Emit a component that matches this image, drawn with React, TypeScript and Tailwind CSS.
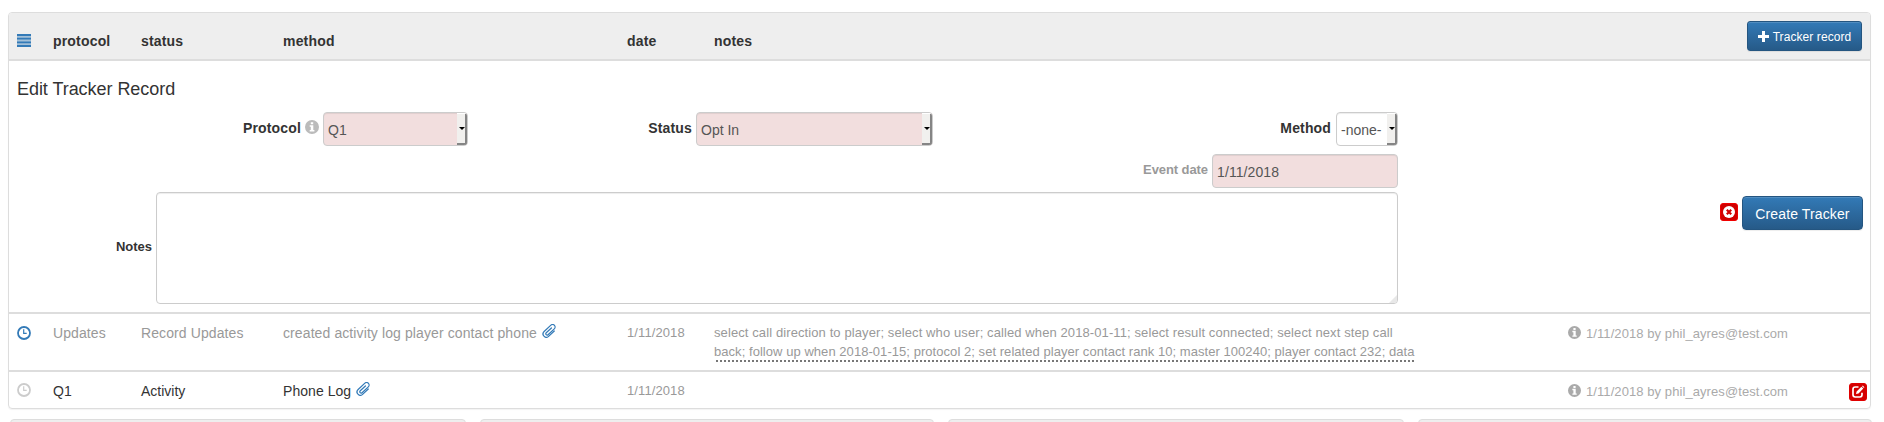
import React from "react";

type IconProps = { className?: string };

const InfoIcon = ({ className = "" }: IconProps) => (
  <svg viewBox="0 0 14 14" className={`shrink-0 ${className}`} fill="currentColor">
    <path fillRule="evenodd" d="M7 0a7 7 0 1 0 0 14A7 7 0 0 0 7 0ZM5.8 2.2h2.4v2H5.8ZM4.7 5.2h3.6v4.9h1.1v1.5H4.7v-1.5h1.1V6.7H4.7Z" />
  </svg>
);

const ClockIcon = ({ className = "" }: IconProps) => (
  <svg viewBox="0 0 14 14" className={`h-3.5 w-3.5 shrink-0 ${className}`} fill="none" stroke="currentColor">
    <circle cx="7" cy="7" r="6" strokeWidth="1.8" />
    <path d="M6.7 3.2v4.2h3" strokeWidth="1.2" />
  </svg>
);

const ClipIcon = () => (
  <svg viewBox="0 0 15 14" className="ml-px mt-px h-3.5 w-[15px] shrink-0 text-[#337ab7]" fill="none" stroke="currentColor" strokeWidth="1.2" strokeLinecap="round">
    <path transform="translate(7.5 7) rotate(47)" d="M3.3-3.500V4.300a3.300 3.300 0 0 1-6.600 0V-5a2.500 2.500 0 0 1 5 0V3.600a1.300 1.300 0 0 1-2.600 0V-3.500" />
  </svg>
);

const RedCloseIcon = () => (
  <svg viewBox="0 0 18 18" className="h-[18px] w-[18px] shrink-0" fill="none">
    <rect x=".5" y=".5" width="17" height="17" rx="2.5" fill="#d00000" stroke="#f00000" />
    <circle cx="9" cy="9" r="6" fill="#fff" />
    <path d="m6.800 6.800 4.400 4.400m0-4.400-4.400 4.400" stroke="#d00000" strokeWidth="2.200" />
  </svg>
);

const RedEditIcon = () => (
  <svg viewBox="0 0 18 18" className="h-[18px] w-[18px] shrink-0" fill="none">
    <rect x=".5" y=".5" width="17" height="17" rx="2.5" fill="#d40000" stroke="#e00000" />
    <path d="M9.500 4H6.200C4.700 4 4 4.700 4 6.200v5.600C4 13.300 4.700 14 6.200 14h4.600c1.500 0 2.200-.7 2.200-2.200V9.800" stroke="#fff" strokeWidth="1.7" />
    <path d="m7 11 .6-2.500 4.800-4.800 1.900 1.900-4.800 4.800ZM13 3.200l.8-.6 1.600 1.600-.6.800Z" fill="#fff" />
  </svg>
);

function SelectBox({ value, className }: { value: string; className: string }) {
  return (
    <button type="button" className={`flex h-[34px] shrink-0 items-stretch overflow-hidden rounded border border-[#ccc] text-left text-[14px] font-normal text-[#555] shadow-[inset_0_1px_1px_rgba(0,0,0,0.075)] ${className}`}>
      <span className="flex-1 whitespace-nowrap pl-1 pt-[7px] leading-5">{value}</span>
      <span className="flex w-[10px] items-center justify-end border-b-2 border-r-2 border-t border-b-[#858585] border-r-[#858585] border-t-white bg-[#f1f0ee]">
        <svg viewBox="0 0 6 3" className="h-[3px] w-1.5 shrink-0"><path d="M0 0h6L3 3Z" /></svg>
      </span>
    </button>
  );
}

function Audit() {
  return (
    <div className="flex w-[283px] gap-[5px] pt-px text-[13px] leading-[19px] tracking-[0.08px] text-[#aaa]">
      <InfoIcon className="mt-0.5 h-[13px] w-[13px]" />
      <span className="whitespace-nowrap">1/11/2018 by phil_ayres@test.com</span>
    </div>
  );
}

export default function App() {
  return (
    <div className="h-[422px] overflow-hidden bg-white pl-2 pt-3 font-['Liberation_Sans',Arial,sans-serif] text-[14px] leading-5 text-[#333]">
      <section className="h-[397px] w-[1863px] overflow-hidden rounded border border-[#ddd] shadow-[0_1px_1px_rgba(0,0,0,0.05)]">
        <header className="flex h-[48px] border-b-2 border-[#ddd] bg-[#eee] pl-2 font-bold tracking-[0.18px]">
          <svg viewBox="0 0 14 13" className="mt-[21px] h-[13px] w-3.5 text-[#337ab7]" fill="currentColor">
            <path opacity=".4" d="M0 0h14v13H0z" />
            <path d="M0 0h14v2H0zM0 3.700h14v1.900H0zM0 7.400h14v1.900H0zM0 11h14v2H0z" />
          </svg>
          <span className="ml-[22px] w-[88px] pt-[18px]">protocol</span>
          <span className="w-[142px] pt-[18px]">status</span>
          <span className="w-[344px] pt-[18px]">method</span>
          <span className="w-[87px] pt-[18px]">date</span>
          <span className="pt-[18px]">notes</span>
          <button className="ml-auto mr-2 mt-2 flex h-[30px] w-[115px] items-center justify-center gap-1 rounded-[3px] border border-[#245580] bg-linear-to-b from-[#337ab7] to-[#265a88] pt-px text-[12px] font-normal tracking-[0.08px] text-white shadow-[inset_0_1px_0_rgba(255,255,255,0.15),0_1px_1px_rgba(0,0,0,0.075)]">
            <svg viewBox="0 0 11 11" className="h-[11px] w-[11px]" fill="currentColor"><path d="M4 0h3v4h4v3H7v4H4V7H0V4h4z" /></svg>
            <span className="whitespace-nowrap">Tracker record</span>
          </button>
        </header>

        <form className="h-[251px]">
          <h4 className="h-[51px] pl-2 pt-[18px] text-[18px] leading-5 tracking-[-0.05px]">Edit Tracker Record</h4>
          <div className="flex">
            <div className="w-[1389px]">
              <div className="flex h-[42px] font-bold">
                <div className="flex w-[459px] justify-end">
                  <span className="mt-1.5 tracking-[0.15px]">Protocol</span>
                  <InfoIcon className="ml-1 mr-1 mt-2 h-3.5 w-3.5 text-[#bbb]" />
                  <SelectBox value="Q1" className="w-[145px] bg-[#f2dede]" />
                </div>
                <div className="flex w-[465px] justify-end gap-1">
                  <span className="mt-1.5 tracking-[0.15px]">Status</span>
                  <SelectBox value="Opt In" className="w-[237px] bg-[#f2dede]" />
                </div>
                <div className="flex w-[465px] justify-end gap-[5px]">
                  <span className="mt-1.5 tracking-[0.15px]">Method</span>
                  <SelectBox value="-none-" className="w-[62px] bg-white" />
                </div>
              </div>
              <div className="flex h-[38px] justify-end gap-1">
                <span className="mt-1.5 text-[13px] font-bold tracking-[-0.08px] text-[#999]">Event date</span>
                <input readOnly value="1/11/2018" className="h-[34px] w-[186px] rounded border border-[#ccc] bg-[#f2dede] pl-1 pt-px text-[14px] tracking-[0.1px] text-[#555] shadow-[inset_0_1px_1px_rgba(0,0,0,0.075)] outline-none" />
              </div>
              <div className="flex justify-end gap-1">
                <span className="mt-[45px] text-[13px] font-bold">Notes</span>
                <div className="flex h-[112px] w-[1242px] items-end justify-end rounded border border-[#ccc] bg-white shadow-[inset_0_1px_1px_rgba(0,0,0,0.075)]">
                  <svg viewBox="0 0 8 8" className="h-2 w-2"><path d="M8 0v5a3 3 0 0 1-3 3H0Z" fill="#e8e8e8" /></svg>
                </div>
              </div>
            </div>
            <div className="flex flex-1 justify-end gap-1 pr-[7px] pt-[84px]">
              <span className="mt-[7px]"><RedCloseIcon /></span>
              <button type="button" className="h-[34px] w-[121px] rounded border border-[#245580] bg-linear-to-b from-[#337ab7] to-[#265a88] pt-px text-[14px] tracking-[0.12px] text-white shadow-[inset_0_1px_0_rgba(255,255,255,0.15),0_1px_1px_rgba(0,0,0,0.075)]">Create Tracker</button>
            </div>
          </div>
        </form>

        <div className="flex h-[58px] border-t-2 border-[#ddd] pl-2 pt-[9px] tracking-[0.1px] text-[#999]">
          <ClockIcon className="mt-[3px] text-[#337ab7]" />
          <span className="ml-[22px] w-[88px]">Updates</span>
          <span className="w-[142px]">Record Updates</span>
          <span className="flex w-[344px] gap-1">created activity log player contact phone <ClipIcon /></span>
          <span className="w-[87px] text-[13px] leading-[19px]">1/11/2018</span>
          <div className="w-[854px] text-[13px] leading-[19px]">
            <p className="whitespace-nowrap">select call direction to player; select who user; called when 2018-01-11; select result connected; select next step call</p>
            <p className="ml-0.5 h-[20px] w-[698px] whitespace-nowrap border-b-2 border-dotted border-[#777] tracking-[0.05px]"><span className="-ml-0.5">back; follow up when 2018-01-15; protocol 2; set related player contact rank 10; master 100240; player contact 232; data</span></p>
          </div>
          <Audit />
        </div>

        <div className="flex h-[38px] border-t-2 border-[#ddd] pl-2 pt-[9px]">
          <ClockIcon className="mt-0.5 text-[#ccc]" />
          <span className="ml-[22px] w-[88px]">Q1</span>
          <span className="w-[142px]">Activity</span>
          <span className="flex w-[344px] gap-1 tracking-[0.05px]">Phone Log <ClipIcon /></span>
          <span className="w-[941px] text-[13px] leading-[19px] tracking-[0.1px] text-[#999]">1/11/2018</span>
          <Audit />
          <span className="-ml-[2px] mt-0.5"><RedEditIcon /></span>
        </div>
      </section>

      <div className="ml-0.5 mt-2.5 flex gap-[14px]">
        <div className="h-10 w-[456px] shrink-0 rounded border border-[#ddd] bg-[#eee]" />
        <div className="h-10 w-[454px] shrink-0 rounded border border-[#ddd] bg-[#eee]" />
        <div className="h-10 w-[456px] shrink-0 rounded border border-[#ddd] bg-[#eee]" />
        <div className="h-10 w-[454px] shrink-0 rounded border border-[#ddd] bg-[#eee]" />
      </div>
    </div>
  );
}
